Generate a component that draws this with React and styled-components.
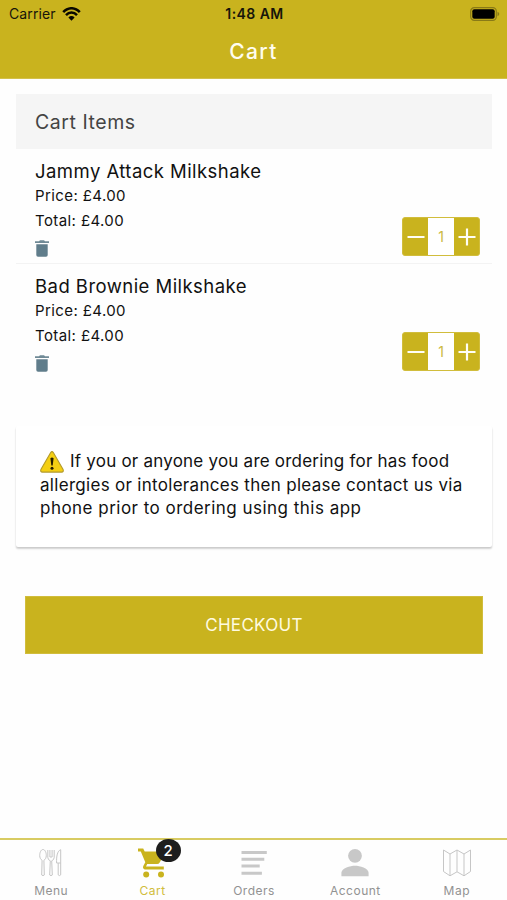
import React from "react";
import styled, { createGlobalStyle } from "styled-components";

const GOLD = "#c9b31e";

const GlobalStyle = createGlobalStyle`
  * { box-sizing: border-box; }
  body { margin: 0; background: #fff; }
`;

const Screen = styled.div`
  width: 507px;
  height: 900px;
  overflow: hidden;
  display: flex;
  flex-direction: column;
  background: #fefefe;
  color: #111;
  font-family: Inter, "Liberation Sans", sans-serif;
`;

const Text = styled.span`
  display: block;
  white-space: nowrap;
  font-size: ${(p) => p.$size}px;
  line-height: ${(p) => p.$line}px;
  letter-spacing: ${(p) => p.$track || 0}px;
  font-weight: ${(p) => p.$weight || 400};
  color: ${(p) => p.$color || "inherit"};
`;

const Header = styled.header`
  height: 79px;
  flex: none;
  background: ${GOLD};
  border-bottom: 1px solid #d3c04a;
`;

const StatusBar = styled.div`
  height: 28px;
  padding: 0 7px 0 9px;
  display: grid;
  grid-template-columns: 1fr auto 1fr;
  align-items: center;
  color: #17150a;
`;

const StatusLeft = styled.div`
  display: flex;
  align-items: center;
  gap: 6px;
`;

const StatusRight = styled.div`
  display: flex;
  justify-content: flex-end;
`;

const Title = styled.h1`
  margin: 0;
  height: 48px;
  text-align: center;
  font-size: 21px;
  line-height: 48px;
  font-weight: 500;
  letter-spacing: 1.4px;
  color: #fffdf0;
`;

const Content = styled.main`
  flex: 1;
  padding: 15px 15px 0 16px;
`;

const ListHeader = styled.div`
  height: 55px;
  padding: 0 19px;
  display: flex;
  align-items: center;
  background: #f5f5f5;
`;

const Item = styled.section`
  height: ${(p) => (p.$divider ? 115 : 114)}px;
  padding: 10px 12px 0 19px;
  display: flex;
  justify-content: space-between;
  border-bottom: ${(p) => (p.$divider ? "1px solid #f3f3f3" : "none")};
`;

const ItemDetails = styled.div`
  svg { display: block; margin-top: 7px; }
`;

const Stepper = styled.div`
  width: 78px;
  height: 39px;
  margin-top: 58px;
  display: grid;
  grid-template-columns: 25px 26px 25px;
  border: 1px solid #d1bd3c;
  border-radius: 3px;
  overflow: hidden;
  background: ${GOLD};
`;

const StepButton = styled.button`
  border: 0;
  padding: 0;
  background: transparent;
  display: flex;
  align-items: center;
  justify-content: center;
`;

const Quantity = styled.div`
  background: #fff;
  display: flex;
  align-items: center;
  justify-content: center;
`;

const Notice = styled.section`
  margin-top: 48px;
  height: 121px;
  padding: 24px 24px 0 24px;
  background: #fff;
  border-radius: 2px;
  box-shadow: 0 2px 2px rgba(0, 0, 0, 0.16), 0 1px 2px rgba(0, 0, 0, 0.07);
`;

const NoticeLine = styled.div`
  height: 23.4px;
  display: flex;
  align-items: center;
  gap: 6px;
`;

const Checkout = styled.button`
  display: flex;
  align-items: center;
  justify-content: center;
  width: 458px;
  height: 58px;
  margin: 49px 0 0 9px;
  border: 1px solid #d1bd3c;
  padding: 0;
  background: ${GOLD};
  font-family: inherit;
`;

const TabBar = styled.nav`
  flex: none;
  height: 62px;
  border-top: 2px solid #d8cb62;
  display: grid;
  grid-template-columns: repeat(5, 1fr);
`;

const Tab = styled.div`
  display: flex;
  flex-direction: column;
  align-items: center;
  padding: 7px 0 0 1px;
`;

const IconBox = styled.div`
  position: relative;
  width: 32px;
  height: 32px;
  margin-bottom: 4px;
  svg { display: block; }
`;

const Badge = styled.div`
  position: absolute;
  left: 19px;
  top: -8px;
  width: 25px;
  height: 23px;
  border-radius: 50%;
  background: #1d1d1d;
  display: flex;
  align-items: center;
  justify-content: center;
`;

const WifiIcon = () => (
  <svg width="19" height="14" viewBox="0 0 19 14" fill="none" stroke="#090800" strokeWidth="2.5">
    <path d="M1.2 5.2C6-.1 13-.1 17.8 5.2" />
    <path d="M4 8.1c3.2-3.4 7.8-3.4 11 0" />
    <path d="M9.5 13.7 6.4 10.4c1.8-1.8 4.4-1.8 6.2 0z" fill="#090800" stroke="none" />
  </svg>
);

const BatteryIcon = () => (
  <svg width="30" height="14" viewBox="0 0 30 14">
    <rect x=".7" y=".7" width="25.6" height="12.6" rx="3.6" fill="none" stroke="#897a17" strokeWidth="1.2" />
    <rect x="2.3" y="2.3" width="22.4" height="9.4" rx="2" fill="#000" />
    <path d="M27.5 4.8c2.3.8 2.3 3.6 0 4.4z" fill="#897a17" />
  </svg>
);

const TrashIcon = () => (
  <svg width="14" height="17" viewBox="0 0 14 17" fill="#607d8b">
    <path d="M0 1.3h4L5 .3h4l1 1h4v1.7H0z" opacity=".9" />
    <path d="M1.3 4.3h11.4v10.8q0 1.7-1.7 1.7H3q-1.7 0-1.7-1.7z" />
  </svg>
);

const StepIcon = ({ plus }) => (
  <svg width="18" height="18" viewBox="0 0 18 18" stroke="#fffef5" strokeWidth="2.2">
    <path d={plus ? "M.5 9h17M9 .5v17" : "M.5 9h17"} />
  </svg>
);

const WarningIcon = () => (
  <svg width="24" height="22" viewBox="0 0 24 22">
    <path d="M10.7 1.5q1.3-1.8 2.6 0l9.8 17.1q.8 2.3-1.5 2.5H2.4Q.1 20.9.9 18.6z" fill="#f4cf13" stroke="#b39a2b" strokeWidth="1.1" />
    <path d="M10.4 7.2q1.6-1.5 3.2 0l-.9 7.2h-1.4z" fill="#241c00" />
    <circle cx="12" cy="17.2" r="1.5" fill="#241c00" />
  </svg>
);

const CutleryIcon = () => (
  <svg width="32" height="32" viewBox="0 0 32 32" fill="none" stroke="#c6c6c6" strokeWidth="1">
    <path d="M8 2.5c-2 0-3.3 3.1-3.3 6 0 2.4 1.1 4 2.4 4.8L6.7 28q1.3 1.4 2.6 0l-.4-14.7c1.3-.8 2.4-2.4 2.4-4.8 0-2.9-1.3-6-3.3-6z" />
    <path d="M12.8 3v7.5q.3 2.6 2.5 3.3L14.7 28q1.3 1.4 2.6 0l-.6-14.2q2.2-.7 2.5-3.3V3M14.9 3v7h2.2V3" />
    <path d="M25.7 2.7v25.2q-1.3 1.4-2.5 0V16h-1.6c-.3-7 .9-12.2 4.1-13.3zM23.2 16h2.5" />
  </svg>
);

const CartIcon = () => (
  <svg width="32" height="32" viewBox="0 0 32 32" fill={GOLD}>
    <path d="M1 1.4h5.2l1.5 3H27q1.5.2.9 1.7l-5.2 9.4q-.9 1.5-2.6 1.5H10.2L9 19.4h17.8v3H8.4c-2 0-3-2-2.1-3.5l2-3.6L3.8 4.4H1z" />
    <circle cx="9.2" cy="27.4" r="3" />
    <circle cx="24" cy="27.4" r="3" />
  </svg>
);

const OrdersIcon = () => (
  <svg width="32" height="32" viewBox="0 0 32 32" stroke="#c8c8c8" strokeWidth="3">
    <path d="M3.5 5.5h25.3M3.5 12.3h22.8M3.5 19.1h18.2M3.5 26.2h20.4" />
  </svg>
);

const AccountIcon = () => (
  <svg width="32" height="32" viewBox="0 0 32 32" fill="#c8c8c8">
    <circle cx="16" cy="8.8" r="6.9" />
    <path d="M2.4 29.2v-3.5c0-4.6 9-7 13.6-7s13.6 2.4 13.6 7v3.5z" />
  </svg>
);

const MapIcon = () => (
  <svg width="32" height="32" viewBox="0 0 32 32" fill="none" stroke="#c6c6c6" strokeWidth="1">
    <path d="M2.5 3 9 7l7-4 7 4 6.5-4v21.5L23 28.8l-7-4-7 4-6.5-4.3zM9 7v21.8M16 3v21.8M23 7v21.8" />
  </svg>
);

const items = ["Jammy Attack Milkshake", "Bad Brownie Milkshake"];

const tabs = [
  { label: "Menu", Icon: CutleryIcon },
  { label: "Cart", Icon: CartIcon, badge: 2 },
  { label: "Orders", Icon: OrdersIcon },
  { label: "Account", Icon: AccountIcon },
  { label: "Map", Icon: MapIcon },
];

export default function App() {
  return (
    <Screen>
      <GlobalStyle />
      <Header>
        <StatusBar>
          <StatusLeft>
            <Text $size={14} $line={28} $track={0.1}>Carrier</Text>
            <WifiIcon />
          </StatusLeft>
          <Text $size={14} $line={28} $weight={600} $track={0.45}>1:48 AM</Text>
          <StatusRight><BatteryIcon /></StatusRight>
        </StatusBar>
        <Title>Cart</Title>
      </Header>
      <Content>
        <ListHeader>
          <Text $size={19.5} $line={24} $track={0.55} $color="#444">Cart Items</Text>
        </ListHeader>
        {items.map((name, i) => (
          <Item key={name} $divider={i === 0}>
            <ItemDetails>
              <Text $size={18.5} $line={25} $track={0.45}>{name}</Text>
              <Text $size={15} $line={24} $track={0.4}>Price: £4.00</Text>
              <Text $size={15} $line={25} $track={0.4}>Total: £4.00</Text>
              <TrashIcon />
            </ItemDetails>
            <Stepper>
              <StepButton aria-label="Decrease"><StepIcon /></StepButton>
              <Quantity><Text $size={14} $line={20} $color="#cbb93f">1</Text></Quantity>
              <StepButton aria-label="Increase"><StepIcon plus /></StepButton>
            </Stepper>
          </Item>
        ))}
        <Notice>
          <NoticeLine>
            <WarningIcon />
            <Text $size={17} $line={23} $track={0.22}>If you or anyone you are ordering for has food</Text>
          </NoticeLine>
          <NoticeLine>
            <Text $size={17} $line={23} $track={0.3}>allergies or intolerances then please contact us via</Text>
          </NoticeLine>
          <NoticeLine>
            <Text $size={17} $line={23} $track={0.48}>phone prior to ordering using this app</Text>
          </NoticeLine>
        </Notice>
        <Checkout>
          <Text $size={17} $line={24} $track={0.3} $color="#fffbe0">CHECKOUT</Text>
        </Checkout>
      </Content>
      <TabBar>
        {tabs.map(({ label, Icon, badge }) => (
          <Tab key={label}>
            <IconBox>
              <Icon />
              {badge && <Badge><Text $size={15} $line={20} $weight={500} $color="#fff">{badge}</Text></Badge>}
            </IconBox>
            <Text $size={12} $line={16} $track={0.5} $color={badge ? "#d1bd3c" : "#929292"}>{label}</Text>
          </Tab>
        ))}
      </TabBar>
    </Screen>
  );
}
